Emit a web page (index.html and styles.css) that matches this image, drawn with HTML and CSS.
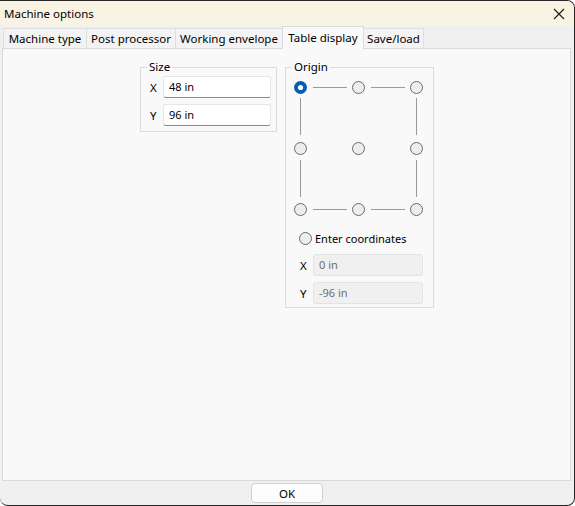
FILE: index.html
```html
<!DOCTYPE html>
<html>
<head>
<meta charset="utf-8">
<link rel="stylesheet" href="styles.css">
</head>
<body>
<div class="window">
  <div class="titlebar">
    <span class="title">Machine options</span>
    <svg class="close" width="12" height="12" viewBox="0 0 12 12"><path d="M1 1 L11 11 M11 1 L1 11" stroke="#1a1a1a" stroke-width="1.1" fill="none"/></svg>
  </div>
  <div class="tabs">
    <div class="tab w1">Machine type</div>
    <div class="tab w2">Post processor</div>
    <div class="tab w3">Working envelope</div>
    <div class="tab w4 active">Table display</div>
    <div class="tab w5">Save/load</div>
  </div>
  <div class="panel">
    <div class="group size">
      <span class="legend">Size</span>
      <div class="row"><span class="lbl">X</span><div class="input">48 in</div></div>
      <div class="row"><span class="lbl">Y</span><div class="input">96 in</div></div>
    </div>
    <div class="group origin">
      <span class="legend">Origin</span>
      <svg class="grid" width="147" height="158" viewBox="0 0 147 158">
        <g stroke="#9a9a9a" stroke-width="1" fill="none">
          <path d="M27 19.5 H61 M85 19.5 H119 M27 141.5 H61 M85 141.5 H119"/>
          <path d="M14.5 30 V67 M14.5 92 V129 M130.5 30 V67 M130.5 92 V129"/>
        </g>
        <g fill="#ededed" stroke="#6b6b6b" stroke-width="1">
          <circle cx="72.5" cy="19.5" r="6"/>
          <circle cx="130.5" cy="19.5" r="6"/>
          <circle cx="14.5" cy="80.5" r="6"/>
          <circle cx="72.5" cy="80.5" r="6"/>
          <circle cx="130.5" cy="80.5" r="6"/>
          <circle cx="14.5" cy="141.5" r="6"/>
          <circle cx="72.5" cy="141.5" r="6"/>
          <circle cx="130.5" cy="141.5" r="6"/>
        </g>
        <circle cx="14.5" cy="19.5" r="6.5" fill="#005fb8"/>
        <circle cx="14.5" cy="19.5" r="2.6" fill="#ffffff"/>
      </svg>
      <div class="enter"><span class="radio"></span><span>Enter coordinates</span></div>
      <div class="row"><span class="lbl">X</span><div class="input disabled">0 in</div></div>
      <div class="row"><span class="lbl">Y</span><div class="input disabled">-96 in</div></div>
    </div>
  </div>
  <div class="footer">
    <div class="btn">OK</div>
  </div>
</div>
</body>
</html>
```
FILE: styles.css
```css
html, body {
  margin: 0;
  padding: 0;
  background: #ffffff;
}
body {
  font-family: "Noto Sans", "Open Sans", sans-serif;
  font-size: 11px;
  color: #000;
}
.window {
  width: 575px;
  height: 506px;
  box-sizing: border-box;
  border: 1px solid #262626;
  border-left: none;
  border-radius: 0 8px 8px 8px;
  background: #f0f0f0;
  display: flex;
  flex-direction: column;
  overflow: hidden;
}
.titlebar {
  height: 25px;
  background: #f8f3e3;
  display: flex;
  align-items: center;
  justify-content: space-between;
  padding: 0 9px 0 4px;
  flex-shrink: 0;
  font-size: 11.5px;
}
.title {
  line-height: 16px;
  margin-top: 1px;
}
.close {
  display: block;
  margin-top: 1px;
}
.tabs {
  height: 22px;
  display: flex;
  align-items: flex-end;
  padding-left: 3px;
  flex-shrink: 0;
  position: relative;
  z-index: 1;
  font-size: 11.5px;
}
.tab {
  height: 20px;
  box-sizing: border-box;
  border: 1px solid #dedede;
  border-bottom: none;
  margin-left: -1px;
  background: #f3f3f3;
  display: flex;
  align-items: center;
  justify-content: center;
  white-space: nowrap;
  padding-bottom: 1px;
}
.tab:first-child { margin-left: 0; }
.tab.active {
  height: 23px;
  margin-bottom: -1px;
  background: #f9f9f9;
  padding-bottom: 2px;
  border-color: #dadada;
}
.w1 { width: 84px; }
.w2 { width: 90px; }
.w3 { width: 108px; }
.w4 { width: 82px; }
.w5 { width: 61px; }
.panel {
  flex: 1 1 auto;
  margin: 0 3px 0 2px;
  border: 1px solid #dadada;
  background: #f9f9f9;
  display: flex;
  align-items: flex-start;
  gap: 8px;
  padding: 18px 0 0 137px;
}
.group {
  position: relative;
  border: 1px solid #dcdcdc;
  box-sizing: border-box;
}
.legend {
  position: absolute;
  top: -9px;
  left: 6px;
  padding: 0 2px;
  background: #f9f9f9;
  line-height: 16px;
  font-size: 11.5px;
}
.size {
  width: 137px;
  height: 65px;
  padding: 8px 5px 0 9px;
  display: flex;
  flex-direction: column;
  gap: 6px;
}
.row {
  display: flex;
  align-items: center;
}
.lbl {
  width: 13px;
  flex-shrink: 0;
  font-size: 11.5px;
}
.input {
  flex: 1;
  height: 22px;
  box-sizing: border-box;
  background: #ffffff;
  border: 1px solid #e6e6e6;
  border-bottom-color: #8a8a8a;
  border-radius: 3px;
  padding-left: 5px;
  display: flex;
  align-items: center;
  line-height: 16px;
}
.input.disabled {
  background: #f0f0f0;
  border-color: #e3e3e3;
  color: #6d6d6d;
}
.origin {
  width: 149px;
  height: 241px;
  padding: 0 10px 0 0;
  display: flex;
  flex-direction: column;
}
.origin .grid {
  display: block;
  flex-shrink: 0;
}
.origin .row {
  padding-left: 14px;
}
.origin .row + .row {
  margin-top: 6px;
}
.enter {
  height: 24px;
  display: flex;
  align-items: center;
  padding-left: 13px;
  margin-bottom: 4px;
}
.radio {
  width: 13px;
  height: 13px;
  box-sizing: border-box;
  border: 1px solid #6b6b6b;
  border-radius: 50%;
  background: #ededed;
  margin-right: 3px;
}
.footer {
  flex: 0 0 24px;
  display: flex;
  justify-content: center;
  padding-top: 2px;
  box-sizing: border-box;
}
.btn {
  width: 72px;
  height: 20px;
  box-sizing: border-box;
  border: 1px solid #d0d0d0;
  border-radius: 4px;
  background: #fdfdfd;
  display: flex;
  align-items: center;
  justify-content: center;
  font-size: 11.5px;
}
```
